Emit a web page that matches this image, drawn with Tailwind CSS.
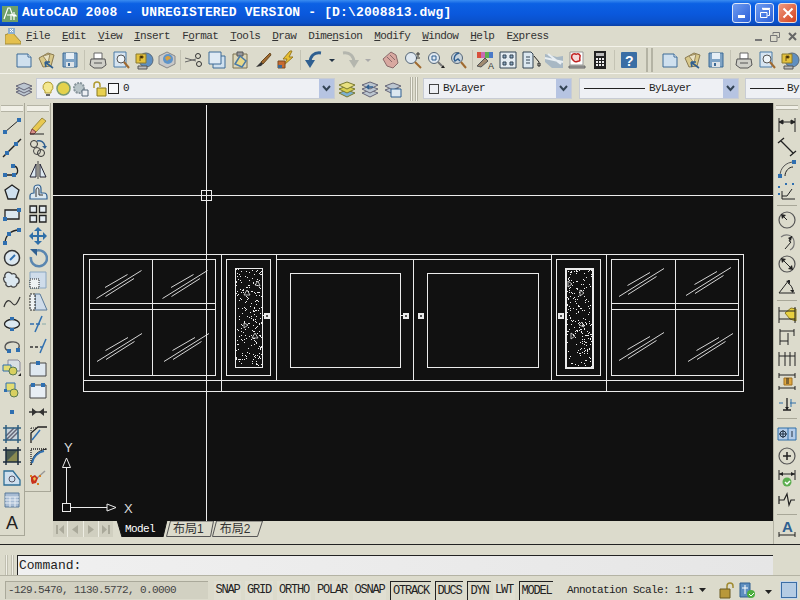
<!DOCTYPE html>
<html lang="en">
<head>
<meta charset="UTF-8" />
<title>AutoCAD 2008</title>
<script src="https://cdn.jsdelivr.net/npm/@tailwindcss/browser@4"></script>
</head>
<body class="m-0">
<!-- shared toolbar icons, the right end of the toolbar repeats the first ones -->
<svg class="hidden">
  <symbol id="i-new" viewBox="0 0 20 20"><path d="M3 4h11l3 3v10H3z" fill="#cfe0ee" stroke="#3c6a96"/><path d="M14 4v3h3" stroke="#3c6a96" fill="#fff"/></symbol>
  <symbol id="i-open" viewBox="0 0 20 20"><path d="M2 8l9-5 6 2-3 11-8 1z" fill="#d8c88a" stroke="#8a7a50"/><path d="M6 6l7-2-2 9z" fill="#e9e2c4" stroke="#9a8a60"/><path d="M8 12l8 6M8 12l1 5M8 12l5 0" stroke="#2f5f90" stroke-width="1.6"/></symbol>
  <symbol id="i-save" viewBox="0 0 20 20"><path d="M3 3h14v14H3z" fill="#7fa3c4" stroke="#3c6a96"/><path d="M6 3h8v6H6z" fill="#e6eef5"/><path d="M6 12h8v5H6z" fill="#dfe4e8"/><path d="M8 13h2v3H8z" fill="#3c6a96"/></symbol>
  <symbol id="i-plot" viewBox="0 0 20 20"><path d="M6 3h8v6H6z" fill="#fff" stroke="#666"/><path d="M3 9h14l1 6-4 3H6l-4-3z" fill="#cfcfc8" stroke="#555"/><path d="M6 13h8" stroke="#555"/></symbol>
  <symbol id="i-preview" viewBox="0 0 20 20"><path d="M3 2h12v15H3z" fill="#d6e4f0" stroke="#4a7aa6"/><circle cx="10" cy="9" r="4" fill="#eef4f8" stroke="#555"/><path d="M13 12l5 6" stroke="#a06a30" stroke-width="2"/></symbol>
  <symbol id="i-publish" viewBox="0 0 20 20"><circle cx="12" cy="10" r="7" fill="#5f8fc0" stroke="#5a6a7a"/><path d="M2 4h10v9H2z" fill="#e3c13c" stroke="#8a7a30"/><path d="M4 16h9v3H4z" fill="#bbb" stroke="#555"/><path d="M6 6v5M6 6h3v2H6" stroke="#7a5a10"/></symbol>
</svg>

<div class="w-[800px] h-[600px] overflow-hidden flex flex-col bg-[#dcdbcc] text-[#222] font-['Liberation_Mono',monospace] text-[11px] tracking-[-0.6px]">

  <!-- title bar -->
  <div class="h-[26px] shrink-0 flex items-center pl-[2px] pr-[3px] bg-[linear-gradient(180deg,#3a8cf0_0%,#0c61e4_14%,#0a58dc_55%,#0a50c8_88%,#0b3fa4_100%)]">
    <svg class="w-4 h-4 shrink-0 mt-[2px]" viewBox="0 0 16 16"><path d="M0 0h16v16H0z" fill="#6fa06a"/><path d="M2 13L6 2h2l3 8h4M9 8v6M5 9h9M12 6v8" stroke="#fff" stroke-width="1.2" fill="none"/></svg>
    <div class="ml-[4px] text-white font-bold text-[13px] tracking-[0.15px] whitespace-pre">AutoCAD 2008 - UNREGISTERED VERSION - [D:\2008813.dwg]</div>
    <div class="ml-auto flex gap-[4px]">
      <div class="w-[19px] h-[20px] rounded-[3px] border border-[#dfe8f8] bg-[linear-gradient(135deg,#6f9cf0,#2a5fd8)] flex items-end pl-[5px] pb-[4px]"><div class="w-[7px] h-[3px] bg-white"></div></div>
      <div class="w-[19px] h-[20px] rounded-[3px] border border-[#dfe8f8] bg-[linear-gradient(135deg,#6f9cf0,#2a5fd8)] flex items-center justify-center">
        <svg class="w-[12px] h-[12px]" viewBox="0 0 12 12" fill="none" stroke="#fff"><path d="M3.5 2.5h7v6h-2"/><path d="M3 1.5h8" stroke-width="1.4"/><path d="M1.5 5.5h6.5v5H1.5z"/></svg>
      </div>
      <div class="w-[19px] h-[20px] rounded-[3px] border border-[#f0dcd4] bg-[linear-gradient(135deg,#ee9a80,#d4401c)] flex items-center justify-center">
        <svg class="w-[12px] h-[12px]" viewBox="0 0 12 12" stroke="#fff" stroke-width="2"><path d="M1.5 1.5l9 9M10.5 1.5l-9 9"/></svg>
      </div>
    </div>
  </div>

  <!-- menu bar -->
  <div class="h-[20px] shrink-0 flex items-center pl-[5px] pt-px text-[#333]">
    <svg class="w-[16px] h-[17px] shrink-0" viewBox="0 0 16 17"><path d="M0 16V7l7-3 9 10v2z" fill="#e4c04e" stroke="#a08a3a"/><path d="M3 0h7v6H3z" fill="#8fb0d0"/><path d="M5 1l3 3M8 1L5 4" stroke="#fff"/></svg>
    <div class="ml-[5px] flex gap-3">
      <span><u>F</u>ile</span><span><u>E</u>dit</span><span><u>V</u>iew</span><span><u>I</u>nsert</span><span>F<u>o</u>rmat</span><span><u>T</u>ools</span><span><u>D</u>raw</span><span>Dime<u>n</u>sion</span><span><u>M</u>odify</span><span><u>W</u>indow</span><span><u>H</u>elp</span><span>E<u>x</u>press</span>
    </div>
    <div class="ml-auto mr-[3px] flex items-center gap-[8px] text-[#777]">
      <div class="w-[7px] h-[2px] bg-[#777] mt-[6px]"></div>
      <svg class="w-[10px] h-[10px]" viewBox="0 0 10 10" fill="none" stroke="#777"><path d="M3 2.5V.5h6.500v5H7.500"/><path d="M.5 3.500h6.500v6H.5z"/></svg>
      <svg class="w-[9px] h-[9px]" viewBox="0 0 9 9" stroke="#666" stroke-width="2"><path d="M1 1l7 7M8 1L1 8"/></svg>
    </div>
  </div>

  <!-- standard toolbar -->
  <div class="h-[27px] shrink-0 flex items-center gap-[3px] pl-[14px] border-t border-[#f4f3ea] relative">
    <svg class="w-5 h-5 shrink-0"><use href="#i-new"/></svg>
    <svg class="w-5 h-5 shrink-0"><use href="#i-open"/></svg>
    <svg class="w-5 h-5 shrink-0"><use href="#i-save"/></svg>
    <div class="w-[2px] h-5 mx-px bg-[#c4c3b4]"></div>
    <svg class="w-5 h-5 shrink-0"><use href="#i-plot"/></svg>
    <svg class="w-5 h-5 shrink-0"><use href="#i-preview"/></svg>
    <svg class="w-5 h-5 shrink-0"><use href="#i-publish"/></svg>
    <svg class="w-5 h-5 shrink-0" viewBox="0 0 20 20"><path d="M10 2l8 4v8l-8 4-8-4V6z" fill="#c8c8c8" stroke="#888"/><circle cx="11" cy="9" r="5" fill="#5f94c8"/><path d="M8 8c2-3 5-2 6 0-1 2-3 1-4 3z" fill="#d8a040"/></svg>
    <div class="w-[2px] h-5 bg-[#c4c3b4]"></div>
    <svg class="w-5 h-5 shrink-0" viewBox="0 0 20 20" fill="none" stroke="#333"><circle cx="14" cy="6" r="2.500"/><circle cx="15" cy="14" r="2.500"/><path d="M1 8l11 3M1 12l11-3" stroke="#666"/></svg>
    <svg class="w-5 h-5 shrink-0" viewBox="0 0 20 20"><path d="M6 6h12v12H6z" fill="#cfe0ee" stroke="#3c6a96"/><path d="M2 2h12v12H2z" fill="#dfeaf4" stroke="#3c6a96"/></svg>
    <svg class="w-5 h-5 shrink-0" viewBox="0 0 20 20"><path d="M3 4h14v14H3z" fill="#ddd7b8" stroke="#7a7050"/><path d="M7 2h6v4H7z" fill="#999" stroke="#555"/><path d="M10 6l6 5-4 6-7-3z" fill="#e8d888" stroke="#4a7aa6" stroke-width="1.5"/></svg>
    <svg class="w-5 h-5 shrink-0" viewBox="0 0 20 20"><path d="M17 3L8 12l2 2 8-9z" fill="#a06a30" stroke="#6a4a20"/><path d="M8 12l-5 5 5-1 2-2z" fill="#333"/></svg>
    <svg class="w-5 h-5 shrink-0" viewBox="0 0 20 20"><path d="M14 1L7 9h4l-3 6 9-8h-4l3-6z" fill="#e8c030" stroke="#9a7a20"/><path d="M2 11h7v7H2z" fill="#c86a30" stroke="#7a4a20"/><path d="M2 15h4v3H2z" fill="#3c6a96"/></svg>
    <div class="w-[2px] h-5 mx-px bg-[#c4c3b4]"></div>
    <svg class="w-5 h-5 shrink-0" viewBox="0 0 20 20" fill="none"><path d="M17 3C10 2 6 6 6 13" stroke="#2f5f90" stroke-width="3"/><path d="M1 10l5 8 5-8z" fill="#2f5f90"/></svg>
    <svg class="w-[10px] h-5 shrink-0" viewBox="0 0 10 20"><path d="M2 9h6l-3 3z" fill="#234"/></svg>
    <svg class="w-5 h-5 shrink-0" viewBox="0 0 20 20" fill="none"><path d="M3 3c7-1 11 3 11 10" stroke="#b4b6ae" stroke-width="3"/><path d="M19 10l-5 8-5-8z" fill="#b4b6ae"/></svg>
    <svg class="w-[10px] h-5 shrink-0" viewBox="0 0 10 20"><path d="M2 9h6l-3 3z" fill="#aaa"/></svg>
    <div class="w-[3px] h-5"></div>
    <svg class="w-5 h-5 shrink-0" viewBox="0 0 20 20"><path d="M3 9l8-7 5 3 2 8-5 5-6-2z" fill="#d8a8a0" stroke="#8a6a6a"/><path d="M7 7l5 5M10 5l5 5" stroke="#8a6a6a"/></svg>
    <svg class="w-5 h-5 shrink-0" viewBox="0 0 20 20" fill="none"><circle cx="8" cy="8" r="5.500" fill="#dfe8f0" stroke="#567"/><path d="M12 12l6 6" stroke="#a06a30" stroke-width="2"/><path d="M15 2v5M13 4h4M13 8h4" stroke="#333"/></svg>
    <svg class="w-5 h-5 shrink-0" viewBox="0 0 20 20" fill="none"><circle cx="8" cy="8" r="5.500" fill="#dfe8f0" stroke="#567"/><path d="M6 6h4v4H6z" stroke="#2f5f90"/><path d="M12 12l4 4" stroke="#777" stroke-width="2"/><path d="M15 18h4l-2-3z" fill="#222"/></svg>
    <svg class="w-5 h-5 shrink-0" viewBox="0 0 20 20" fill="none"><circle cx="8" cy="8" r="5.500" fill="#c8d4dc" stroke="#567"/><path d="M10 3C6 4 4 8 6 11l3-2 2 2" stroke="#2f5f90" stroke-width="1.500"/><path d="M12 12l5 6" stroke="#a06a30" stroke-width="2"/></svg>
    <div class="w-px h-5 bg-[#c4c3b4]"></div>
    <svg class="w-5 h-5 shrink-0" viewBox="0 0 20 20"><path d="M2 2h16v6H2z" fill="#c86ab0"/><path d="M2 2h4v6H2z" fill="#d8503c"/><path d="M10 2h4v6h-4z" fill="#5cae50"/><path d="M14 2h4v6h-4z" fill="#4a7ac8"/><path d="M2 16l8-8 3 3-7 6z" fill="#a08a70" stroke="#555"/><text x="13" y="19" font-size="9" fill="#333" font-family="Liberation Sans">A</text></svg>
    <svg class="w-5 h-5 shrink-0" viewBox="0 0 20 20" fill="#8aa6c0" stroke="#345"><path d="M2 2h16v16H2z" fill="#e4ecf2"/><path d="M5 5h3v3H5zM12 5h3v3h-3zM5 12h3v3H5zM12 12h3v3h-3z"/></svg>
    <svg class="w-5 h-5 shrink-0" viewBox="0 0 20 20" fill="none" stroke="#345"><path d="M2 2h8l2 2v14H2z" fill="#dce8f0"/><path d="M5 7h4M5 10h4M5 13h4"/><path d="M13 6l5 6M17 13h2v3h-2z" stroke="#222"/></svg>
    <svg class="w-5 h-5 shrink-0" viewBox="0 0 20 20"><path d="M1 4l12 3 6-1v12H8L1 12z" fill="#a8b8c4"/><path d="M1 8l18 4M4 4l13 10" stroke="#e8eef2" stroke-width="2"/></svg>
    <svg class="w-5 h-5 shrink-0" viewBox="0 0 20 20"><path d="M2 16h16v2H2z" fill="#aaa" stroke="#666"/><path d="M3 2h13v13H3z" fill="#fff" stroke="#999"/><path d="M5 5c2-3 4 0 5-1s4 1 3 3 1 4-1 4-3 2-5 0-3-3-2-6z" fill="#f4d8d8" stroke="#c02020" stroke-width="1.500"/></svg>
    <svg class="w-5 h-5 shrink-0" viewBox="0 0 20 20"><path d="M4 1h12v18H4z" fill="#222"/><path d="M6 3h8v3H6z" fill="#bbb"/><path d="M6 8h2v2H6zM9 8h2v2H9zM12 8h2v2h-2zM6 11h2v2H6zM9 11h2v2H9zM12 11h2v2h-2zM6 14h2v2H6zM9 14h2v2H9zM12 14h2v2h-2z" fill="#eee"/></svg>
    <div class="w-[2px] h-5 mx-px bg-[#c4c3b4]"></div>
    <svg class="w-5 h-5 shrink-0" viewBox="0 0 20 20"><path d="M3 2h14a1 1 0 011 1v14a1 1 0 01-1 1H3a1 1 0 01-1-1V3a1 1 0 011-1z" fill="#3a6ea5"/><text x="10" y="15.500" text-anchor="middle" font-size="14" font-weight="bold" fill="#fff" font-family="Liberation Sans">?</text></svg>
    <div class="w-[15px] h-[24px] shrink-0 flex justify-center gap-[3px]"><div class="w-[2px] border-x border-[#b4b3a4] bg-[#f4f3ea]"></div><div class="w-[2px] border-x border-[#b4b3a4] bg-[#f4f3ea]"></div></div>
    <svg class="w-5 h-5 shrink-0"><use href="#i-new"/></svg>
    <svg class="w-5 h-5 shrink-0"><use href="#i-open"/></svg>
    <svg class="w-5 h-5 shrink-0"><use href="#i-save"/></svg>
    <div class="w-[2px] h-5 mx-px bg-[#c4c3b4]"></div>
    <svg class="w-5 h-5 shrink-0"><use href="#i-plot"/></svg>
    <svg class="w-5 h-5 shrink-0"><use href="#i-preview"/></svg>
    <svg class="w-5 h-5 shrink-0"><use href="#i-publish"/></svg>
  </div>

  <!-- layers and properties toolbar -->
  <div class="h-[27px] shrink-0 flex items-center pl-[14px] pt-[3px] border-t border-[#f4f3ea]">
    <svg class="w-5 h-5 shrink-0" viewBox="0 0 20 20" fill="#bcc6d0" stroke="#667"><path d="M10 10l8 3-8 4-8-4z"/><path d="M10 7l8 3-8 4-8-4z"/><path d="M10 4l8 3-8 4-8-4z"/></svg>
    <div class="ml-[2px] w-[299px] h-[21px] shrink-0 flex items-center border border-[#c8ccd4] bg-[#eef0f4]">
      <svg class="ml-[4px] w-[14px] h-[16px] shrink-0" viewBox="0 0 14 16"><path d="M7 1a5 5 0 013 9v2H4v-2a5 5 0 013-9z" fill="#f4e890" stroke="#b09a30"/><path d="M5 14h4" stroke="#666" stroke-width="2"/></svg>
      <svg class="ml-px w-[15px] h-[15px] shrink-0" viewBox="0 0 15 15"><circle cx="7.500" cy="7.500" r="6.500" fill="#e4d24c" stroke="#7a9a70" stroke-width="1.500"/></svg>
      <svg class="ml-px w-[17px] h-[16px] shrink-0" viewBox="0 0 17 16"><circle cx="7" cy="7" r="5" fill="#b8c4c8" stroke="#88959c" stroke-width="2" stroke-dasharray="2 1"/><path d="M10 9h6v6h-6z" fill="#eef0f4" stroke="#567"/></svg>
      <svg class="ml-[3px] w-[15px] h-[16px] shrink-0" viewBox="0 0 15 16" fill="none"><path d="M2 7V4a3 3 0 016 0v2" stroke="#b09a30" stroke-width="1.500"/><path d="M5 7h9v8H5z" fill="#e8d050" stroke="#8a7a20"/></svg>
      <div class="ml-[1px] w-[11px] h-[11px] shrink-0 border border-[#222] bg-white/60"></div>
      <span class="ml-[4px]">0</span>
      <div class="ml-auto w-[15px] h-full bg-[#b6c4e2] flex items-center justify-center">
        <svg class="w-[9px] h-[7px]" viewBox="0 0 9 7" fill="none" stroke="#345" stroke-width="2"><path d="M1 1l3.500 4L8 1"/></svg>
      </div>
    </div>
    <svg class="ml-[2px] w-5 h-5 shrink-0" viewBox="0 0 20 20" stroke="#7a7a30"><path d="M10 11l8 3-8 4-8-4z" fill="#7ab0d0"/><path d="M10 7l8 3-8 4-8-4z" fill="#d8d050"/><path d="M10 3l8 3-8 4-8-4z" fill="#e8e080"/></svg>
    <svg class="ml-[3px] w-5 h-5 shrink-0" viewBox="0 0 20 20" fill="#bcc6d0" stroke="#667"><path d="M10 11l8 3-8 4-8-4z"/><path d="M10 7l8 3-8 4-8-4z"/><path d="M10 3l8 3-8 4-8-4z"/><path d="M13 8H7l2-2M7 8l2 2" stroke="#2f5f90" stroke-width="1.500" fill="none"/></svg>
    <svg class="ml-[3px] w-5 h-5 shrink-0" viewBox="0 0 20 20" fill="#bcc6d0" stroke="#667"><path d="M10 8l8 3-8 4-8-4z"/><path d="M10 4l8 3-8 4-8-4z"/><path d="M8 10h10v8H8z" fill="#dce8f0" stroke="#2f5f90"/></svg>
    <div class="ml-[7px] w-[8px] h-[24px] shrink-0 flex justify-between"><div class="w-[3px] border-x border-[#b4b3a4] bg-[#f4f3ea]"></div><div class="w-[3px] border-x border-[#b4b3a4] bg-[#f4f3ea]"></div></div>
    <div class="ml-[5px] w-[149px] h-[21px] shrink-0 flex items-center border border-[#c8ccd4] bg-[#eef0f4]">
      <div class="ml-[5px] w-[10px] h-[10px] border border-[#444] shrink-0"></div>
      <span class="ml-[4px]">ByLayer</span>
      <div class="ml-auto w-[15px] h-full bg-[#b6c4e2] flex items-center justify-center">
        <svg class="w-[9px] h-[7px]" viewBox="0 0 9 7" fill="none" stroke="#345" stroke-width="2"><path d="M1 1l3.500 4L8 1"/></svg>
      </div>
    </div>
    <div class="ml-[7px] w-[160px] h-[21px] shrink-0 flex items-center border border-[#c8ccd4] bg-[#eef0f4]">
      <div class="ml-[4px] w-[61px] h-px bg-[#222] shrink-0"></div>
      <span class="ml-[4px]">ByLayer</span>
      <div class="ml-auto w-[15px] h-full bg-[#b6c4e2] flex items-center justify-center">
        <svg class="w-[9px] h-[7px]" viewBox="0 0 9 7" fill="none" stroke="#345" stroke-width="2"><path d="M1 1l3.500 4L8 1"/></svg>
      </div>
    </div>
    <div class="ml-[6px] flex-1 min-w-0 h-[21px] flex items-center border-y border-l border-[#c8ccd4] bg-[#eef0f4]">
      <div class="ml-[4px] w-[34px] h-px bg-[#222] shrink-0"></div>
      <span class="ml-[3px]">By</span>
    </div>
  </div>

  <!-- drawing area with docked toolbars -->
  <div class="h-[441px] shrink-0 mt-[3px] flex">
    <div class="w-[25px] h-[433px] shrink-0 flex flex-col items-center gap-[2px] border-r border-b border-[#a8a798] pt-[2px]">
      <div class="w-[22px] h-[7px] border-y border-[#b4b3a4] bg-[#f0efe6] mb-[2px]"></div>
      <svg class="w-5 h-5 shrink-0" viewBox="0 0 20 20"><path d="M3 16L17 4" stroke="#222"/><path d="M1 14h4v4H1zM15 2h4v4h-4z" fill="#2f6fb0"/></svg>
      <svg class="w-5 h-5 shrink-0" viewBox="0 0 20 20"><path d="M1 19L19 1" stroke="#222" stroke-width="1.500"/><path d="M3 13h4v4H3zM12 4h4v4h-4z" fill="#2f6fb0"/></svg>
      <svg class="w-5 h-5 shrink-0" viewBox="0 0 20 20" fill="none"><path d="M3 15h9c5 0 5-9-1-9" stroke="#222" stroke-width="1.300"/><path d="M1 13h4v4H1zM10 13h4v4h-4zM9 4h4v4H9z" fill="#2f6fb0"/></svg>
      <svg class="w-5 h-5 shrink-0" viewBox="0 0 20 20"><path d="M10 3l7 5-3 9H6L3 8z" fill="#cfe0ee" stroke="#222" stroke-width="1.300"/></svg>
      <svg class="w-5 h-5 shrink-0" viewBox="0 0 20 20"><path d="M3 6h14v9H3z" fill="#dce8f0" stroke="#222" stroke-width="1.300"/><path d="M1 13h4v4H1zM15 4h4v4h-4z" fill="#2f6fb0"/></svg>
      <svg class="w-5 h-5 shrink-0" viewBox="0 0 20 20" fill="none"><path d="M3 17C3 10 9 4 17 4" stroke="#222" stroke-width="1.300"/><path d="M1 15h4v4H1zM5 6h4v4H5zM15 2h4v4h-4z" fill="#2f6fb0"/></svg>
      <svg class="w-5 h-5 shrink-0" viewBox="0 0 20 20"><circle cx="10" cy="10" r="7.500" fill="#dce8f0" stroke="#333" stroke-width="1.500"/><path d="M8 12l5-5" stroke="#2f6fb0" stroke-width="2"/></svg>
      <svg class="w-5 h-5 shrink-0" viewBox="0 0 20 20"><path d="M4 3c3-2 5 0 6 1 3-1 5 1 4 3 4 1 4 6 1 7 0 3-4 4-6 2-3 2-6-1-5-3C1 11 1 7 3 7 2 5 3 4 4 3z" fill="#dce8f0" stroke="#444" stroke-width="1.300"/></svg>
      <svg class="w-5 h-5 shrink-0" viewBox="0 0 20 20" fill="none"><path d="M2 15c2-7 5-8 8-4s5 1 8-6" stroke="#333" stroke-width="1.200"/></svg>
      <svg class="w-5 h-5 shrink-0" viewBox="0 0 20 20"><ellipse cx="10" cy="10" rx="7.500" ry="4.500" fill="#dce8f0" stroke="#222" stroke-width="1.300"/><path d="M8 3h4v3H8zM8 14h4v3H8z" fill="#2f6fb0"/></svg>
      <svg class="w-5 h-5 shrink-0" viewBox="0 0 20 20" fill="none"><path d="M7 15C1 13 2 7 9 6s10 3 7 7" stroke="#555" stroke-width="1.400"/><path d="M5 13h4v4H5zM14 12h4v4h-4z" fill="#2f6fb0"/></svg>
      <svg class="w-5 h-5 shrink-0" viewBox="0 0 20 20"><path d="M6 2h10l2 2v9H6z" fill="#d8dfe4" stroke="#889"/><path d="M1 7h8v6H1z" fill="#e4dc70" stroke="#2f6fb0"/><circle cx="11" cy="13" r="4" fill="#d8d060" stroke="#5a7a50"/><path d="M16 18h3v-3z" fill="#222"/></svg>
      <svg class="w-5 h-5 shrink-0" viewBox="0 0 20 20"><path d="M4 3h9v8H4z" fill="#e4dc70" stroke="#2f6fb0"/><circle cx="12" cy="13" r="4" fill="#d8d060" stroke="#5a7a50"/><path d="M2 9h3v3H2z" fill="#2f6fb0"/></svg>
      <svg class="w-5 h-5 shrink-0" viewBox="0 0 20 20"><path d="M8 8h4v4H8z" fill="#2f6fb0"/></svg>
      <svg class="w-5 h-5 shrink-0" viewBox="0 0 20 20"><path d="M4 4h12v12H4z" fill="#c8d4dc"/><path d="M4 12l8-8M4 16L16 4M8 16l8-8" stroke="#667" stroke-width="1.500"/><path d="M1 4h18M1 16h18M4 1v18M16 1v18" stroke="#2f5f80" stroke-width="1.500"/></svg>
      <svg class="w-5 h-5 shrink-0" viewBox="0 0 20 20"><path d="M4 4h12v12H4z" fill="#4a5a50"/><path d="M16 4L4 16h12z" fill="#8a8a50"/><path d="M1 4h18M1 16h18M4 1v18M16 1v18" stroke="#1c2c3c" stroke-width="1.500"/></svg>
      <svg class="w-5 h-5 shrink-0" viewBox="0 0 20 20"><path d="M2 3h9l7 9v5H2z" fill="#cfe0ee" stroke="#2f6f96" stroke-width="1.300"/><circle cx="10" cy="11" r="3" fill="none" stroke="#556"/></svg>
      <svg class="w-5 h-5 shrink-0" viewBox="0 0 20 20"><path d="M3 3h14v14H3z" fill="#a8bcd4" stroke="#5a7a9a"/><path d="M3 7h14M3 10h14M3 13h14M8 7v10M13 7v10" stroke="#e8eef4"/></svg>
      <span class="w-5 h-[22px] shrink-0 flex items-center justify-center font-['Liberation_Sans',sans-serif] text-[18px] tracking-normal">A</span>
    </div>

    <div class="w-[26px] h-[389px] shrink-0 flex flex-col items-center gap-[2px] border-r border-b border-[#a8a798] pt-[2px]">
      <div class="w-[22px] h-[7px] border-y border-[#b4b3a4] bg-[#f0efe6] mb-[2px]"></div>
      <svg class="w-5 h-5 shrink-0" viewBox="0 0 20 20"><path d="M14 2l4 3-10 11-4-3z" fill="#e8c850" stroke="#9a8a40"/><path d="M4 13l4 3-2 2H2z" fill="#d89088" stroke="#844"/><path d="M2 18h14" stroke="#222"/></svg>
      <svg class="w-5 h-5 shrink-0" viewBox="0 0 20 20" fill="none"><circle cx="6" cy="6" r="3.500" stroke="#333"/><circle cx="13" cy="15" r="3.500" stroke="#333"/><circle cx="9" cy="13" r="3.500" stroke="#444"/><path d="M9 3c4-1 7 1 8 5" stroke="#2f5f90" stroke-width="1.500"/><path d="M14 8h5l-2 3z" fill="#2f5f90"/></svg>
      <svg class="w-5 h-5 shrink-0" viewBox="0 0 20 20"><path d="M10 1v18" stroke="#444"/><path d="M8 4v13H2z" fill="#dce8f0" stroke="#223"/><path d="M12 4v13h6z" fill="#dce8f0" stroke="#223"/></svg>
      <svg class="w-5 h-5 shrink-0" viewBox="0 0 20 20"><path d="M2 17v-3c0-2 2-3 4-3V6c0-2 2-3 4-3s3 2 3 4v4h3c2 0 3 2 3 4v2z" fill="#dce8f0" stroke="#2f5f90" stroke-width="1.200"/><path d="M8 15V8c0-3 3-3 3 0v5h4" stroke="#333" fill="none"/></svg>
      <svg class="w-5 h-5 shrink-0" viewBox="0 0 20 20" fill="#e4ecf2" stroke="#222" stroke-width="1.300"><path d="M2 2h6.500v6.500H2zM11.500 2H18v6.500h-6.500zM2 11.500h6.500V18H2zM11.500 11.500H18V18h-6.500z"/></svg>
      <svg class="w-5 h-5 shrink-0" viewBox="0 0 20 20" fill="#2f6fa8"><path d="M10 1l4 4h-3v4h4V6l4 4-4 4v-3h-4v4h3l-4 4-4-4h3v-4H5v3l-4-4 4-4v3h4V5H6z"/></svg>
      <svg class="w-5 h-5 shrink-0" viewBox="0 0 20 20" fill="none"><path d="M6 4a8 8 0 11-3 5" stroke="#5a86b0" stroke-width="2.500"/><path d="M2 1h7v7z" fill="#2f5f90"/></svg>
      <svg class="w-5 h-5 shrink-0" viewBox="0 0 20 20" fill="none"><path d="M2 2h16v16H2z" fill="#cfdcea" stroke="#8aa6c0"/><path d="M2 9h9v9H2z" fill="#eef2f4" stroke="#222" stroke-dasharray="1 1"/></svg>
      <svg class="w-5 h-5 shrink-0" viewBox="0 0 20 20"><path d="M7 2h5l7 16H7z" fill="#cfdcea" stroke="#5a7a9a"/><path d="M2 2h5v16H2z" fill="#eef2f4" stroke="#222" stroke-dasharray="2 1"/></svg>
      <svg class="w-5 h-5 shrink-0" viewBox="0 0 20 20" fill="none"><path d="M2 10h4M8 10h4" stroke="#2f6fb0" stroke-width="1.500"/><path d="M14 10h4" stroke="#8aa" /><path d="M14 2L7 18" stroke="#2f6fb0" stroke-width="1.500"/></svg>
      <svg class="w-5 h-5 shrink-0" viewBox="0 0 20 20" fill="none"><path d="M2 11h3M7 11h3" stroke="#333" stroke-width="1.500"/><path d="M12 11h3" stroke="#2f6fb0" stroke-width="1.500"/><path d="M18 3l-6 14" stroke="#2f6fb0" stroke-width="1.500"/></svg>
      <svg class="w-5 h-5 shrink-0" viewBox="0 0 20 20"><path d="M2 5h16v13H2z" fill="#dfe8f0" stroke="#444"/><path d="M8 3h4v4H8z" fill="#2f6fb0"/></svg>
      <svg class="w-5 h-5 shrink-0" viewBox="0 0 20 20"><path d="M2 5h16v13H2z" fill="#e8eef4" stroke="#444"/><path d="M3 3h4v4H3zM13 3h4v4h-4z" fill="#2f6fb0"/></svg>
      <svg class="w-5 h-5 shrink-0" viewBox="0 0 20 20"><path d="M1 10h18" stroke="#333" stroke-width="1.500"/><path d="M9 10L4 6v8zM11 10l5-4v8z" fill="#333"/></svg>
      <svg class="w-5 h-5 shrink-0" viewBox="0 0 20 20" fill="none"><path d="M3 19V9L10 3h9" stroke="#222" stroke-width="1.300"/><path d="M3 4h6M3 4v3" stroke="#222" stroke-dasharray="1 1"/><path d="M4 16l8-10" stroke="#2f6fb0" stroke-width="1.500"/></svg>
      <svg class="w-5 h-5 shrink-0" viewBox="0 0 20 20" fill="none"><path d="M3 19V3h16" stroke="#222" stroke-width="1.300" stroke-dasharray="1 1"/><path d="M3 19C4 10 10 4 19 3" stroke="#222"/><path d="M4 17C5 11 10 6 16 5" stroke="#2f6fb0" stroke-width="2"/></svg>
      <svg class="w-5 h-5 shrink-0" viewBox="0 0 20 20"><path d="M17 3L8 11" stroke="#999" stroke-width="1.500"/><path d="M3 9l4-2 3 3-2 5-4 1-1-3z" fill="#c8301c"/><path d="M5 10l2-1 1 2-2 2z" fill="#e8c850"/><path d="M2 7h2v2H2zM9 15h2v2H9zM11 7h2v2h-2z" fill="#d88020"/></svg>
    </div>

    <div class="w-[720px] ml-[2px] shrink-0 flex flex-col">
      <svg id="model" class="w-[720px] h-[418px] bg-[#111111] shrink-0 block" viewBox="53 103 720 418" fill="none" stroke="#ebebeb" stroke-width="1">
        <defs>
          <g id="glass" stroke-width="0.900"><path d="M0 0L45 -28M8.500 -11L31 -24M9 -2L37.500 -20"/></g>
        </defs>
        <!-- cabinet -->
        <g shape-rendering="crispEdges">
          <path d="M83.500 254.500H743.500V391.500H83.500zM83.500 380.500H743.500"/>
          <path d="M89.500 259.500H215.500V375.500H89.500zM152.500 259.500V375.500M89.500 303.500H215.500M89.500 309.500H215.500"/>
          <path d="M221.500 254.500V391.500M276.500 254.500V380.500M413.500 259.500V380.500M551.500 254.500V380.500M606.500 254.500V391.500"/>
          <path d="M276.500 259.500H551.500"/>
          <path d="M226.500 259.500H270.500V375.500H226.500zM556.500 259.500H600.500V375.500H556.500z"/>
          <path d="M290.500 273.500H400.500V367.500H290.500zM427.500 273.500H538.500V367.500H427.500z"/>
          <path d="M611.500 259.500H738.500V375.500H611.500zM675.500 259.500V375.500M611.500 303.500H738.500M611.500 309.500H738.500"/>
          <path d="M235.500 268.500H262.500V367.500H235.500z"/>
          <path d="M565.500 268.500H592.500V367.500H565.500z" stroke-width="2"/>
        </g>
        <use href="#glass" x="96.500" y="298.500"/><use href="#glass" x="162.500" y="298.500"/>
        <use href="#glass" x="97" y="361.500"/><use href="#glass" x="164" y="361.500"/>
        <use href="#glass" x="619" y="296.500"/><use href="#glass" x="686" y="295.500"/>
        <use href="#glass" x="619" y="360.500"/><use href="#glass" x="688" y="361.500"/>
        <!-- speckled door panels -->
        <path id="speckle" stroke="none" fill="#ebebeb"/>
        <path d="M247 290l3 5h-6zM258 281l2 5-5-1zM244 323l4 2-4 3zM255 333l3 5h-6zM568 281l4 3-4 3zM580 290l4 3-4 3zM582 322l2 5-5-2zM571 333l4 3-4 3z" stroke-width="0.800"/>
        <!-- door handles -->
        <g fill="#ebebeb" stroke="none">
          <path d="M264 313h6v6h-6zM262 315h2v1h-2zM403 313h6v6h-6zM401 315h2v1h-2zM418 313h6v6h-6zM558 313h6v6h-6z"/>
          <path d="M266 315h2v2h-2zM405 315h2v2h-2zM420 315h2v2h-2zM560 315h2v2h-2z" fill="#555"/>
        </g>
        <!-- crosshair -->
        <g shape-rendering="crispEdges">
          <path d="M206.500 105V521M53 195.500H773"/>
          <path d="M201.500 190.500h10v10h-10z"/>
        </g>
        <!-- ucs icon -->
        <g shape-rendering="crispEdges">
          <path d="M62.500 503.500h8v8h-8zM66.500 503V467M71 507.500H107"/>
        </g>
        <path d="M66.500 458L62.500 467.500H70.500zM107 504V511L116 507.500z"/>
        <text x="68" y="452" text-anchor="middle" font-family="Liberation Sans" font-size="13" fill="#dddddd" stroke="none">Y</text>
        <text x="128" y="513" text-anchor="middle" font-family="Liberation Sans" font-size="13" fill="#dddddd" stroke="none">X</text>
      </svg>
      <div class="h-[16px] shrink-0 flex text-[#333]">
        <div class="w-[60px] shrink-0 flex bg-[#d0cfc0]">
          <div class="flex-1 border-r border-[#eeeee4] flex items-center justify-center"><svg class="w-[9px] h-[9px]" viewBox="0 0 9 9" fill="#aaa99a"><path d="M0 0h2v9H0zM8 0v9L3 4.500z"/></svg></div>
          <div class="flex-1 border-r border-[#eeeee4] flex items-center justify-center"><svg class="w-[9px] h-[9px]" viewBox="0 0 9 9" fill="#aaa99a"><path d="M7 0v9L1 4.500z"/></svg></div>
          <div class="flex-1 border-r border-[#eeeee4] flex items-center justify-center"><svg class="w-[9px] h-[9px]" viewBox="0 0 9 9" fill="#aaa99a"><path d="M2 0v9l6-4.500z"/></svg></div>
          <div class="flex-1 flex items-center justify-center"><svg class="w-[9px] h-[9px]" viewBox="0 0 9 9" fill="#aaa99a"><path d="M7 0h2v9H7zM1 0v9l5-4.500z"/></svg></div>
        </div>
        <div class="relative flex-1 flex items-center">
          <svg class="absolute inset-0 w-full h-full" viewBox="113 521 660 16" preserveAspectRatio="none" fill="#dcdbcc" stroke="#555">
            <path d="M213.500 521L210.500 536.500H166.500L170.500 521z"/>
            <path d="M262.500 521L257.500 536.500H212.500L216.500 521z"/>
            <path d="M117 520L122 537H163L167 520z" fill="#111" stroke="#111"/>
          </svg>
          <span class="relative ml-[12px] text-white">Model</span>
          <span class="relative ml-[18px] font-['Liberation_Sans','Noto_Sans_CJK_SC',sans-serif] text-[12px] tracking-normal">布局1</span>
          <span class="relative ml-[16px] font-['Liberation_Sans','Noto_Sans_CJK_SC',sans-serif] text-[12px] tracking-normal">布局2</span>
        </div>
      </div>
    </div>

    <div class="flex-1 min-w-0 flex flex-col items-center gap-[2px] border-l border-[#b4b3a4] pt-[2px]">
      <div class="w-[22px] h-[5px] border-y border-[#b4b3a4] bg-[#f0efe6] mb-[3px]"></div>
      <svg class="w-5 h-5 shrink-0" viewBox="0 0 20 20" stroke="#222" fill="none"><path d="M2 3v14M18 3v14M2 7h16"/><path d="M2 7l4-2v4zM18 7l-4-2v4z" fill="#222"/></svg>
      <svg class="w-5 h-5 shrink-0" viewBox="0 0 20 20" stroke="#222" fill="none"><path d="M1 6l6-5M13 19l6-5M4 4l12 12" stroke-width="1.300"/></svg>
      <svg class="w-5 h-5 shrink-0" viewBox="0 0 20 20" fill="none"><path d="M3 17C3 9 9 3 17 3" stroke="#555"/><path d="M8 17C8 12 12 8 16 8" stroke="#222"/><path d="M1 15h4v4H1zM15 1h4v4h-4z" fill="#2f6fb0"/></svg>
      <svg class="w-5 h-5 shrink-0" viewBox="0 0 20 20" fill="none"><path d="M5 18V10M5 18h13M5 15h5l5-7" stroke="#222"/><path d="M1 6l1-1 1 1-1 1zM1 13l1-1 1 1-1 1zM8 3l1-1 1 1-1 1zM15 3l1-1 1 1-1 1z" stroke="#2f6fb0"/></svg>
      <div class="w-[20px] h-px my-[2px] bg-[#a8a798] shrink-0"></div>
      <svg class="w-5 h-5 shrink-0" viewBox="0 0 20 20" fill="none"><circle cx="10" cy="10" r="8" stroke="#555" stroke-width="1.200"/><path d="M10 10L5 5" stroke="#222"/><path d="M4 4l5 1-4 4z" fill="#222"/></svg>
      <svg class="w-5 h-5 shrink-0" viewBox="0 0 20 20" fill="none"><path d="M4 5c5-4 12-2 13 4s-2 8-4 9" stroke="#777" stroke-width="1.200"/><path d="M15 4l-3 5 2 1-6 7" stroke="#222"/><path d="M15 4l-4 2 3 3z" fill="#222"/></svg>
      <svg class="w-5 h-5 shrink-0" viewBox="0 0 20 20" fill="none"><circle cx="10" cy="10" r="8" stroke="#555" stroke-width="1.200"/><path d="M4 4l12 12" stroke="#222"/><path d="M4 4l5 1-4 4zM16 16l-5-1 4-4z" fill="#222"/></svg>
      <svg class="w-5 h-5 shrink-0" viewBox="0 0 20 20" fill="none"><path d="M2 17h16M2 17L12 4" stroke="#222"/><path d="M11 7c3 2 5 5 5 9" stroke="#222"/><path d="M9 5l4-1 0 4zM16 17l-3-3h4z" fill="#222"/></svg>
      <div class="w-[20px] h-px my-[2px] bg-[#a8a798] shrink-0"></div>
      <svg class="w-5 h-5 shrink-0" viewBox="0 0 20 20" fill="none"><path d="M14 3l5 1v12l-6-2L8 8z" fill="#e8d040" stroke="#8a7a20"/><path d="M2 2v16M18 2v16M2 6h16M2 14h16" stroke="#222"/></svg>
      <svg class="w-5 h-5 shrink-0" viewBox="0 0 20 20" fill="none" stroke="#222"><path d="M3 2v16M11 6v12M17 2v7M3 4h14M3 14h8"/></svg>
      <svg class="w-5 h-5 shrink-0" viewBox="0 0 20 20" fill="none" stroke="#222"><path d="M2 3v14M8 3v14M13 3v14M18 3v14M2 7h16"/></svg>
      <svg class="w-5 h-5 shrink-0" viewBox="0 0 20 20" fill="none" stroke="#222"><path d="M2 2v5M18 2v5M2 4h16M2 15v4M18 15v4M2 17h16"/><path d="M7 7h8v7H7z" fill="#e0a840" stroke="#a07020"/><path d="M9 8h3M9 10h3M9 12h3"/></svg>
      <svg class="w-5 h-5 shrink-0" viewBox="0 0 20 20" fill="none"><path d="M10 5v12M6 17h8" stroke="#222" stroke-width="1.300"/><path d="M2 10h4" stroke="#2f6fa8"/><path d="M13 10h6M14 6v8" stroke="#2f6fa8"/><path d="M8 14h4l-2 3z" fill="#222"/></svg>
      <div class="w-[20px] h-px my-[3px] bg-[#a8a798] shrink-0"></div>
      <svg class="w-5 h-5 shrink-0" viewBox="0 0 20 20"><path d="M1 4h18v12H1z" fill="#b4cce8" stroke="#2f6fa8"/><path d="M11 4v12" stroke="#2f6fa8"/><circle cx="6" cy="10" r="3" fill="none" stroke="#234"/><path d="M6 6v8M2 10h8M15 7v6" stroke="#234"/></svg>
      <svg class="w-5 h-5 shrink-0" viewBox="0 0 20 20" fill="none"><circle cx="10" cy="10" r="8" stroke="#555" stroke-width="1.200"/><path d="M10 6v8M6 10h8" stroke="#222" stroke-width="1.500"/></svg>
      <svg class="w-5 h-5 shrink-0" viewBox="0 0 20 20" fill="none"><path d="M2 2v10M18 2v10M2 6h16" stroke="#222"/><path d="M2 6l4-2v4zM18 6l-4-2v4z" fill="#222"/><circle cx="10" cy="14" r="4.500" fill="#5cae50"/><path d="M8 14l2 2 3-3" stroke="#fff" stroke-width="1.500"/></svg>
      <svg class="w-5 h-5 shrink-0" viewBox="0 0 20 20" fill="none" stroke="#222"><path d="M2 6v8M2 10h5l3-6 2 11 2-5h4" stroke-width="1.200"/></svg>
      <div class="w-[20px] h-px my-[2px] bg-[#a8a798] shrink-0"></div>
      <svg class="w-5 h-5 shrink-0" viewBox="0 0 20 20"><text x="10" y="13" text-anchor="middle" font-family="Liberation Sans" font-weight="bold" font-size="15" fill="#2f5f90">A</text><path d="M2 13v5M18 13v5M2 16h16" stroke="#222"/></svg>
    </div>
  </div>

  <!-- command line -->
  <div class="h-[31px] shrink-0 border-t border-[#222] flex items-end pl-[5px]">
    <div class="w-[9px] h-[20px] flex justify-between shrink-0"><div class="w-[3px] border-x border-[#c0bfb0] bg-[#f0efe6]"></div><div class="w-[3px] border-x border-[#c0bfb0] bg-[#f0efe6]"></div></div>
    <div class="ml-[3px] w-[756px] h-[20px] shrink-0 flex items-center border-t border-l border-[#222] bg-[linear-gradient(90deg,#f0f0f0,#e6e6e6)] pl-[1px] text-[13px] tracking-normal">Command:</div>
  </div>

  <!-- status bar -->
  <div class="flex-1 min-h-0 flex items-center pl-[5px] pt-[4px] border-t border-[#b4b3a4] text-[12px] tracking-[-1.200px]">
    <div class="w-[203px] h-[18px] shrink-0 flex items-center border-t border-l border-[#aaa99a] bg-[#d2d1c2] pl-[2px] text-[11px] tracking-[-0.600px] whitespace-pre text-[#444]">-129.5470, 1130.5772, 0.0000</div>
    <div class="ml-[6px] flex gap-[4px] h-[19px] items-stretch text-center leading-[19px]">
      <div class="w-[27px] bg-[#e0dfd2]">SNAP</div>
      <div class="w-[28px] bg-[#e0dfd2]">GRID</div>
      <div class="w-[34px] bg-[#e0dfd2]">ORTHO</div>
      <div class="w-[34px] bg-[#e0dfd2]">POLAR</div>
      <div class="w-[33px] bg-[#e0dfd2]">OSNAP</div>
      <div class="w-[41px] border-t border-l border-[#222]">OTRACK</div>
      <div class="w-[28px] border-t border-l border-[#222]">DUCS</div>
      <div class="w-[24px] border-t border-l border-[#222]">DYN</div>
      <div class="w-[22px] -ml-[2px] bg-[#e0dfd2]">LWT</div>
      <div class="w-[34px] border-t border-l border-[#222]">MODEL</div>
    </div>
    <span class="ml-[14px] text-[11px] tracking-[-0.600px] whitespace-pre">Annotation Scale: 1:1</span>
    <svg class="ml-[6px] w-[7px] h-[4px] shrink-0" viewBox="0 0 7 4"><path d="M0 0h7L3.500 4z" fill="#222"/></svg>
    <svg class="ml-[13px] w-[16px] h-[17px] shrink-0" viewBox="0 0 16 17" fill="none"><path d="M8 7V4a3 3 0 016 0v2" stroke="#a08a30" stroke-width="1.500"/><path d="M1 7h10v9H1z" fill="#b8983a" stroke="#6a5a20"/></svg>
    <svg class="ml-[4px] w-[16px] h-[17px] shrink-0" viewBox="0 0 16 17"><path d="M1 1h10v14H1z" fill="#5f8fc0" stroke="#2f5f90"/><path d="M6 3v9M3 6h6" stroke="#fff"/><circle cx="12" cy="12" r="4" fill="#4cae40"/><path d="M10 12l2 2 3-3" stroke="#fff" fill="none"/></svg>
    <svg class="ml-[10px] w-[7px] h-[4px] shrink-0 mt-[4px]" viewBox="0 0 7 4"><path d="M0 0h7L3.500 4z" fill="#222"/></svg>
    <div class="ml-[9px] w-[16px] h-[16px] shrink-0 border border-[#3a6ea5] bg-[#b4cce4] outline outline-[#c8d8e8]"></div>
  </div>
</div>

<script>
  // dots for the two speckled door panels
  let seed = 7;
  function rnd() { seed = (seed * 16807) % 2147483647; return seed / 2147483647; }
  let d = "";
  [236, 566].forEach(function (left) {
    for (let i = 0; i < 230; i++) {
      const x = left + Math.floor(rnd() * 27);
      const y = 269 + Math.floor(rnd() * 98);
      d += "M" + x + " " + y + "h1v1h-1z";
    }
  });
  document.getElementById("speckle").setAttribute("d", d);
</script>
</body>
</html>
